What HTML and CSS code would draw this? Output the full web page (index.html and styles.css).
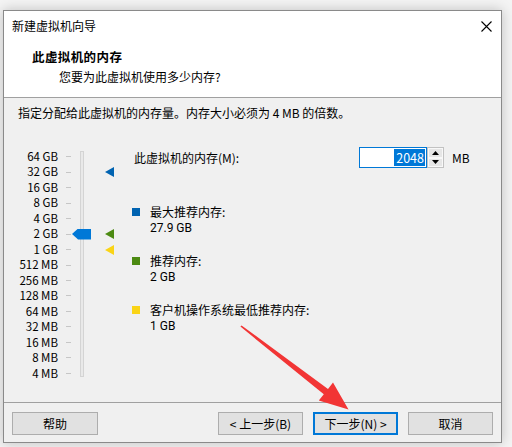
FILE: index.html
```html
<!DOCTYPE html>
<html lang="zh-CN">
<head>
<meta charset="utf-8">
<title>新建虚拟机向导</title>
<link rel="stylesheet" href="styles.css">
</head>
<body>
<div class="dialog">
  <div class="titlebar">
    <span class="title">新建虚拟机向导</span>
    <svg class="close" width="11" height="11" viewBox="0 0 11 11"><path d="M0.5 0.5 L10.5 10.5 M10.5 0.5 L0.5 10.5" stroke="#000" stroke-width="1.1" fill="none"/></svg>
  </div>
  <div class="header">
    <div class="heading">此虚拟机的内存</div>
    <div class="subheading">您要为此虚拟机使用多少内存?</div>
  </div>
  <div class="content">
    <div class="intro">指定分配给此虚拟机的内存量。内存大小必须为 4 MB 的倍数。</div>
    <div class="main">
      <div class="slider">
        <div class="labels">
          <span>64 GB</span><span>32 GB</span><span>16 GB</span><span>8 GB</span><span>4 GB</span>
          <span>2 GB</span><span>1 GB</span><span>512 MB</span><span>256 MB</span><span>128 MB</span>
          <span>64 MB</span><span>32 MB</span><span>16 MB</span><span>8 MB</span><span>4 MB</span>
        </div>
        <div class="ticks">
          <i></i><i></i><i></i><i></i><i></i><i></i><i></i><i></i><i></i><i></i><i></i><i></i><i></i><i></i><i></i>
        </div>
        <div class="rail">
          <div class="track"></div>
          <div class="thumb" style="top: 79.6px"></div>
        </div>
        <div class="markers">
          <i></i><i><b class="mk blue"></b></i><i></i><i></i><i></i><i><b class="mk green"></b></i><i><b class="mk yellow"></b></i>
        </div>
      </div>
      <div class="panel">
        <div class="memrow">
          <span class="memlabel">此虚拟机的内存(M):</span>
          <div class="input"><span class="sel">2048</span></div>
          <div class="spin">
            <div class="spinbtn"><svg width="7" height="4" viewBox="0 0 7 4"><path d="M3.5 0 L7 4 L0 4 Z" fill="#000"/></svg></div>
            <div class="spinbtn"><svg width="7" height="4" viewBox="0 0 7 4"><path d="M0 0 L7 0 L3.5 4 Z" fill="#000"/></svg></div>
          </div>
          <span class="unit">MB</span>
        </div>
        <div class="legend">
          <div class="item">
            <span class="sq blue"></span>
            <div class="itext"><div class="iname">最大推荐内存:</div><div class="ival">27.9 GB</div></div>
          </div>
          <div class="item">
            <span class="sq green"></span>
            <div class="itext"><div class="iname">推荐内存:</div><div class="ival">2 GB</div></div>
          </div>
          <div class="item">
            <span class="sq yellow"></span>
            <div class="itext"><div class="iname">客户机操作系统最低推荐内存:</div><div class="ival">1 GB</div></div>
          </div>
        </div>
      </div>
    </div>
  </div>
  <div class="footer">
    <button class="btn help">帮助</button>
    <div class="spacer"></div>
    <button class="btn">&lt; 上一步(B)</button>
    <button class="btn primary">下一步(N) &gt;</button>
    <button class="btn">取消</button>
  </div>
</div>
<svg class="arrow" width="512" height="447" viewBox="0 0 512 447">
  <polygon points="240.4,326.6 323.8,394.3 318.8,400.6 348.5,409.5 333.0,382.6 328.0,388.9 241.6,325.4" fill="#f23535"/>
</svg>
</body>
</html>
```

FILE: styles.css
```css
* { box-sizing: border-box; }
html, body { margin: 0; padding: 0; }
body {
  width: 512px;
  height: 447px;
  background: #f4f4f4;
  font-family: "Noto Sans CJK SC", "Noto Sans", sans-serif;
  font-size: 12px;
  color: #000;
  position: relative;
  overflow: hidden;
}
.dialog {
  margin: 10px 0 0 3px;
  width: 499px;
  height: 433px;
  border: 1px solid #8a8a8a;
  background: #f0f0f0;
  box-shadow: 0 0 12px rgba(0,0,0,0.22);
  display: flex;
  flex-direction: column;
}
.titlebar {
  height: 30px;
  background: #fff;
  display: flex;
  align-items: center;
  justify-content: space-between;
  padding: 0 9px 0 8px;
  line-height: 16px;
}
.close { display: block; }
.header {
  height: 57px;
  background: #fff;
  border-bottom: 1px solid #a0a0a0;
  padding: 8px 0 0 28px;
  line-height: 16px;
}
.heading { font-weight: bold; font-size: 12.5px; letter-spacing: 0.4px; }
.subheading { margin-top: 4px; margin-left: 27px; }
.content {
  height: 304px;
  padding: 7px 0 0 14px;
}
.intro { line-height: 16px; }
.main {
  display: flex;
  margin-top: 28px;
}
.slider { display: flex; }
.labels {
  width: 40px;
  display: flex;
  flex-direction: column;
  text-align: right;
}
.labels span {
  height: 15.47px;
  line-height: 15.47px;
  font-size: 11.5px;
}
.ticks {
  margin-left: 8px;
  width: 5px;
  display: flex;
  flex-direction: column;
}
.ticks i {
  height: 15.47px;
  display: flex;
  align-items: center;
}
.ticks i::before {
  content: "";
  width: 5px;
  height: 1px;
  background: #c6c6c6;
}
.rail {
  margin-left: 9px;
  width: 4px;
  position: relative;
}
.track {
  margin-top: 2px;
  height: calc(100% - 6px);
  border: 1px solid #d4d4d4;
  background: #e9e9e9;
}
.thumb {
  position: absolute;
  left: -8px;
  width: 19px;
  height: 11px;
  background: #0078d7;
  clip-path: polygon(0 50%, 32% 0, 100% 0, 100% 100%, 32% 100%);
}
.markers {
  margin-left: 21px;
  width: 9px;
  display: flex;
  flex-direction: column;
}
.markers i {
  height: 15.47px;
  display: flex;
  align-items: center;
}
.mk {
  display: block;
  width: 0;
  height: 0;
  border-top: 5px solid transparent;
  border-bottom: 5px solid transparent;
  border-right: 9px solid #0063b1;
}
.mk.blue { border-right-color: #0063b1; }
.mk.green { border-right-color: #4c8a12; }
.mk.yellow { border-right-color: #fad416; }
.panel {
  margin-left: 18px;
  flex: 1;
}
.memrow {
  display: flex;
  align-items: center;
  margin-top: -2px;
  height: 21px;
  margin-left: 2px;
}
.memlabel { width: 225px; line-height: 16px; }
.input {
  width: 68px;
  height: 21px;
  border: 1px solid #0078d7;
  background: #fff;
  display: flex;
  justify-content: flex-end;
  align-items: center;
  padding: 1px;
}
.sel {
  background: #0078d7;
  color: #fff;
  height: 17px;
  line-height: 17px;
  padding: 0 1px 0 2px;
  font-size: 12.5px;
}
.spin {
  width: 17px;
  height: 21px;
  display: flex;
  flex-direction: column;
  border: 1px solid #c2c2c2;
  background: #f0f0f0;
}
.spinbtn {
  flex: 1;
  display: flex;
  align-items: center;
  justify-content: center;
  background: #e6e6e6;
  border: 1px solid #f8f8f8;
}
.spinbtn svg { display: block; }
.unit { margin-left: 8px; line-height: 16px; }
.legend {
  margin-top: 36px;
  display: flex;
  flex-direction: column;
  gap: 17px;
}
.item {
  display: flex;
  align-items: flex-start;
}
.sq {
  width: 8px;
  height: 8px;
  margin-top: 4px;
  flex: none;
}
.sq.blue { background: #0063b1; }
.sq.green { background: #4c8a12; }
.sq.yellow { background: #fad416; }
.itext { margin-left: 10px; }
.iname { line-height: 16px; }
.ival {
  line-height: 16px;
  font-family: Roboto, "Noto Sans", sans-serif;
  font-size: 12px;
}
.footer {
  height: 40px;
  border-top: 1px solid #a0a0a0;
  display: flex;
  align-items: flex-start;
  padding: 9px 8px 0 8px;
  gap: 10px;
}
.spacer { flex: 1; }
.btn {
  width: 85px;
  height: 23px;
  border: 1px solid #adadad;
  background: #e1e1e1;
  font-family: "Noto Sans CJK SC", "Noto Sans", sans-serif;
  font-size: 12px;
  color: #000;
  padding: 0;
  line-height: 16px;
}
.btn.help { width: 86px; }
.btn.primary { border: 2px solid #0078d7; }
.arrow {
  position: absolute;
  left: 0;
  top: 0;
  pointer-events: none;
}
```
